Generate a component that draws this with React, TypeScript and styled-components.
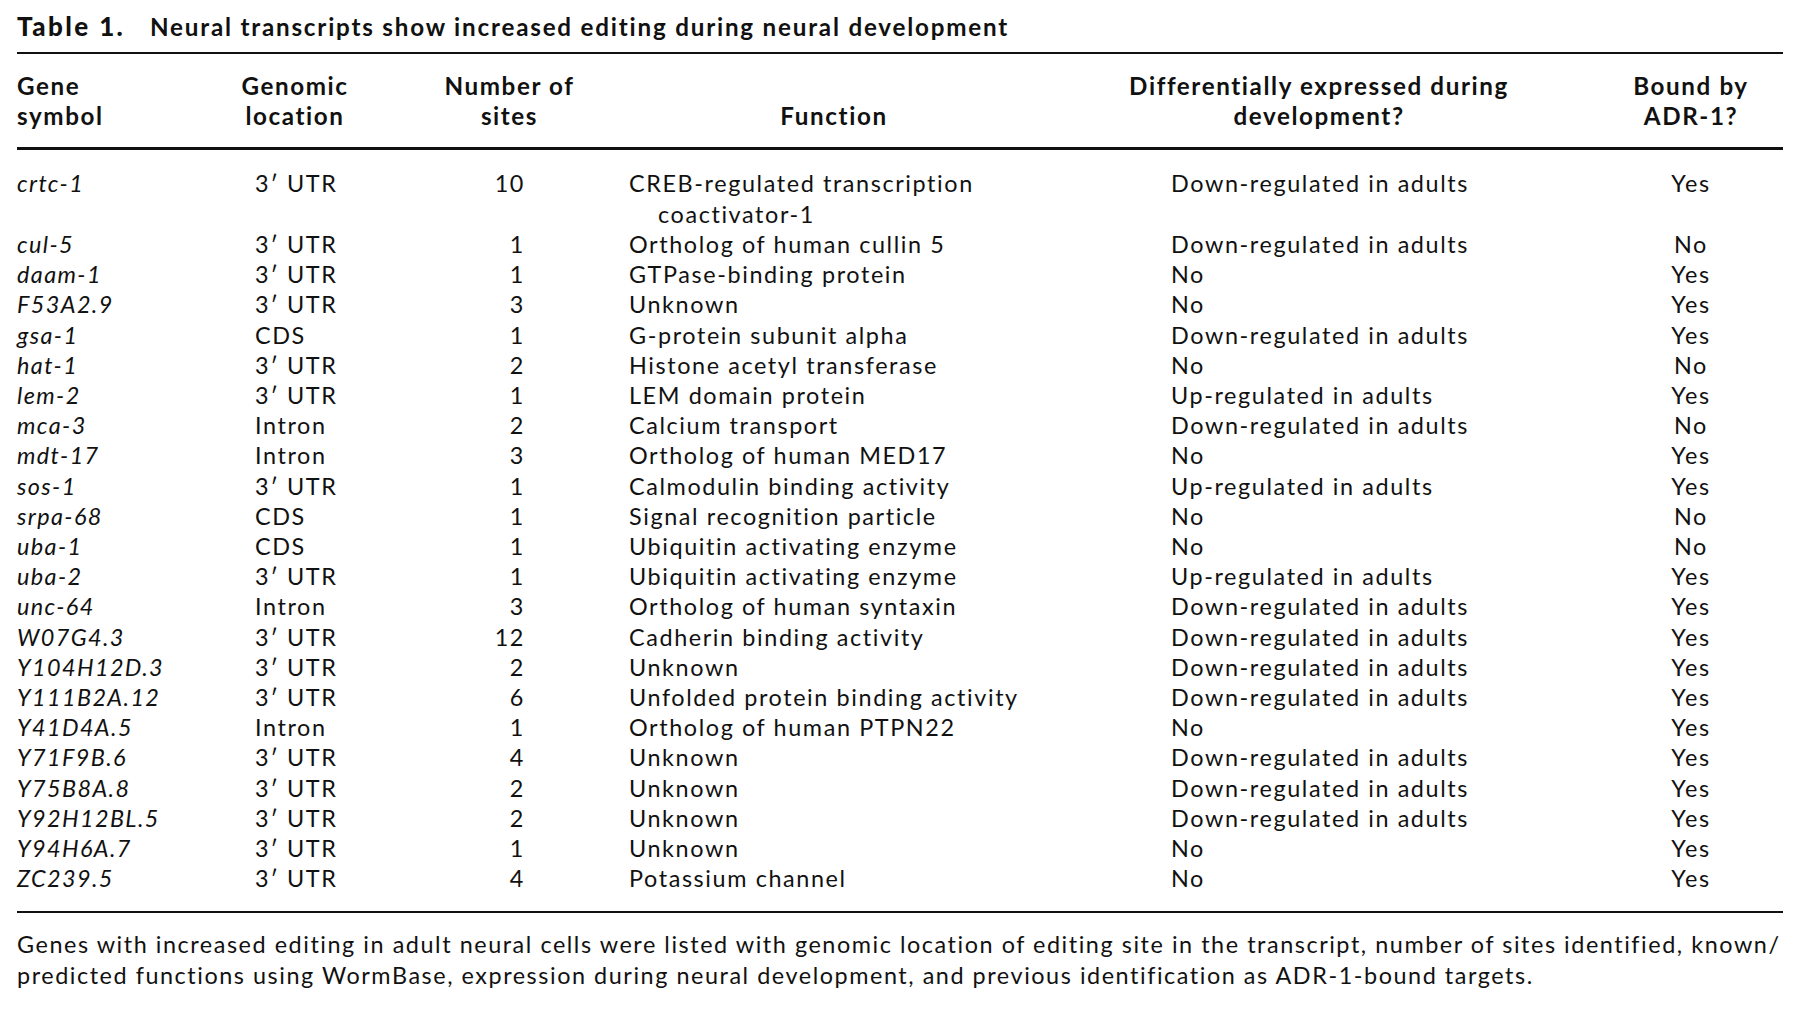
import styled, { createGlobalStyle } from 'styled-components'

const Global = createGlobalStyle`
  html, body {
    margin: 0;
    background: #ffffff;
  }
  body {
    font-family: Lato, "Open Sans", sans-serif;
    color: #111;
  }
`

const Page = styled.div`
  width: 1766px;
  padding: 12px 17px 0;
`

const Caption = styled.div`
  font-size: 24.2px;
  font-weight: 700;
  line-height: 30.2px;
  letter-spacing: 1.8px;
  white-space: nowrap;
  padding-bottom: 9.5px;
  border-bottom: 2px solid #111;
`

const CaptionLabel = styled.span`
  display: inline-block;
  width: 133px;
  font-size: 26px;
  font-weight: 900;
  line-height: 1;
  letter-spacing: 2.4px;
`

const Grid = styled.div`
  display: grid;
  grid-template-columns: 213px 130px 269px 410px 560px 184px;
`

const HeadRow = styled(Grid)`
  align-items: end;
  padding: 17.3px 0 15.7px;
  border-bottom: 3px solid #111;
`

const HeadCell = styled.div<{ $align?: 'left' | 'center'; $pl?: number }>`
  font-size: 24.2px;
  font-weight: 700;
  line-height: 30px;
  letter-spacing: 1.6px;
  text-align: ${p => p.$align || 'center'};
  padding-left: ${p => p.$pl || 0}px;
`

const Body = styled.div`
  padding: 18.8px 0 17.4px;
  border-bottom: 2px solid #111;
`

const Cell = styled.div<{ $align?: 'left' | 'center' | 'right'; $pl?: number; $pr?: number }>`
  font-size: 23.4px;
  line-height: 30.2px;
  letter-spacing: 1.6px;
  text-align: ${p => p.$align || 'left'};
  padding-left: ${p => p.$pl || 0}px;
  padding-right: ${p => p.$pr || 0}px;
  white-space: nowrap;
`

const GeneCell = styled(Cell)`
  font-style: italic;
  letter-spacing: 1.4px;
`

const SitesCell = styled(Cell)`
  font-variant-numeric: tabular-nums;
`

const FunctionCell = styled(Cell)`
  padding-left: 29px;
  text-indent: -29px;
`

const Note = styled.p`
  margin: 0;
  padding-top: 16px;
  font-size: 23.4px;
  line-height: 31px;
  letter-spacing: 1.55px;
  white-space: nowrap;
`

type Row = {
  gene: string
  loc: string
  sites: number
  fn: string[]
  dev: string
  bound: string
}

const rows: Row[] = [
  { gene: 'crtc-1', loc: '3′ UTR', sites: 10, fn: ['CREB-regulated transcription', 'coactivator-1'], dev: 'Down-regulated in adults', bound: 'Yes' },
  { gene: 'cul-5', loc: '3′ UTR', sites: 1, fn: ['Ortholog of human cullin 5'], dev: 'Down-regulated in adults', bound: 'No' },
  { gene: 'daam-1', loc: '3′ UTR', sites: 1, fn: ['GTPase-binding protein'], dev: 'No', bound: 'Yes' },
  { gene: 'F53A2.9', loc: '3′ UTR', sites: 3, fn: ['Unknown'], dev: 'No', bound: 'Yes' },
  { gene: 'gsa-1', loc: 'CDS', sites: 1, fn: ['G-protein subunit alpha'], dev: 'Down-regulated in adults', bound: 'Yes' },
  { gene: 'hat-1', loc: '3′ UTR', sites: 2, fn: ['Histone acetyl transferase'], dev: 'No', bound: 'No' },
  { gene: 'lem-2', loc: '3′ UTR', sites: 1, fn: ['LEM domain protein'], dev: 'Up-regulated in adults', bound: 'Yes' },
  { gene: 'mca-3', loc: 'Intron', sites: 2, fn: ['Calcium transport'], dev: 'Down-regulated in adults', bound: 'No' },
  { gene: 'mdt-17', loc: 'Intron', sites: 3, fn: ['Ortholog of human MED17'], dev: 'No', bound: 'Yes' },
  { gene: 'sos-1', loc: '3′ UTR', sites: 1, fn: ['Calmodulin binding activity'], dev: 'Up-regulated in adults', bound: 'Yes' },
  { gene: 'srpa-68', loc: 'CDS', sites: 1, fn: ['Signal recognition particle'], dev: 'No', bound: 'No' },
  { gene: 'uba-1', loc: 'CDS', sites: 1, fn: ['Ubiquitin activating enzyme'], dev: 'No', bound: 'No' },
  { gene: 'uba-2', loc: '3′ UTR', sites: 1, fn: ['Ubiquitin activating enzyme'], dev: 'Up-regulated in adults', bound: 'Yes' },
  { gene: 'unc-64', loc: 'Intron', sites: 3, fn: ['Ortholog of human syntaxin'], dev: 'Down-regulated in adults', bound: 'Yes' },
  { gene: 'W07G4.3', loc: '3′ UTR', sites: 12, fn: ['Cadherin binding activity'], dev: 'Down-regulated in adults', bound: 'Yes' },
  { gene: 'Y104H12D.3', loc: '3′ UTR', sites: 2, fn: ['Unknown'], dev: 'Down-regulated in adults', bound: 'Yes' },
  { gene: 'Y111B2A.12', loc: '3′ UTR', sites: 6, fn: ['Unfolded protein binding activity'], dev: 'Down-regulated in adults', bound: 'Yes' },
  { gene: 'Y41D4A.5', loc: 'Intron', sites: 1, fn: ['Ortholog of human PTPN22'], dev: 'No', bound: 'Yes' },
  { gene: 'Y71F9B.6', loc: '3′ UTR', sites: 4, fn: ['Unknown'], dev: 'Down-regulated in adults', bound: 'Yes' },
  { gene: 'Y75B8A.8', loc: '3′ UTR', sites: 2, fn: ['Unknown'], dev: 'Down-regulated in adults', bound: 'Yes' },
  { gene: 'Y92H12BL.5', loc: '3′ UTR', sites: 2, fn: ['Unknown'], dev: 'Down-regulated in adults', bound: 'Yes' },
  { gene: 'Y94H6A.7', loc: '3′ UTR', sites: 1, fn: ['Unknown'], dev: 'No', bound: 'Yes' },
  { gene: 'ZC239.5', loc: '3′ UTR', sites: 4, fn: ['Potassium channel'], dev: 'No', bound: 'Yes' },
]

export default function App() {
  return (
    <>
      <Global />
      <Page>
        <Caption>
          <CaptionLabel>Table 1.</CaptionLabel>
          Neural transcripts show increased editing during neural development
        </Caption>

        <HeadRow>
          <HeadCell $align="left">Gene<br />symbol</HeadCell>
          <HeadCell>Genomic<br />location</HeadCell>
          <HeadCell $pl={30}>Number of<br />sites</HeadCell>
          <HeadCell>Function</HeadCell>
          <HeadCell>Differentially expressed during<br />development?</HeadCell>
          <HeadCell>Bound by<br />ADR-1?</HeadCell>
        </HeadRow>

        <Body>
          {rows.map(r => (
            <Grid key={r.gene}>
              <GeneCell>{r.gene}</GeneCell>
              <Cell $pl={25}>{r.loc}</Cell>
              <SitesCell $align="right" $pr={104}>{r.sites}</SitesCell>
              <FunctionCell>
                {r.fn.map((line, i) => (
                  <span key={line}>
                    {i > 0 && <br />}
                    {line}
                  </span>
                ))}
              </FunctionCell>
              <Cell $pl={132}>{r.dev}</Cell>
              <Cell $align="center">{r.bound}</Cell>
            </Grid>
          ))}
        </Body>

        <Note>
          Genes with increased editing in adult neural cells were listed with genomic location of editing site in the transcript, number of sites identified, known/
          <br />
          predicted functions using WormBase, expression during neural development, and previous identification as ADR-1-bound targets.
        </Note>
      </Page>
    </>
  )
}
